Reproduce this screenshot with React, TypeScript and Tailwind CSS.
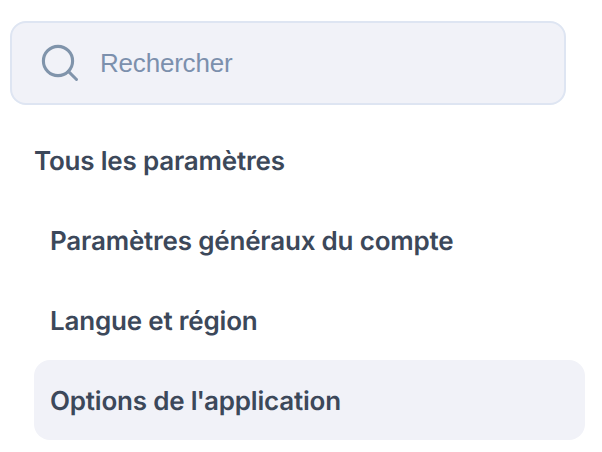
import { ReactNode, useState } from "react";

interface SettingsItem {
  id: string;
  label: ReactNode;
}

const items: SettingsItem[] = [
  { id: "account", label: "Paramètres généraux du compte" },
  { id: "language", label: "Langue et région" },
  {
    id: "app",
    label: (
      <>
        Options de <span className="tracking-[-1px]">l'</span>application
      </>
    ),
  },
];

const SearchIcon = () => (
  <svg width="40" height="40" viewBox="0 0 40 40" fill="none" className="shrink-0 text-[#8094ab]">
    <circle cx="18" cy="18" r="14.6" stroke="currentColor" strokeWidth="3.1" />
    <path d="M28.4 28.4l8.1 8.1" stroke="currentColor" strokeWidth="3" strokeLinecap="round" />
  </svg>
);

const App = () => {
  const [active, setActive] = useState("app");

  return (
    <div className="h-[452px] w-[602px] overflow-hidden bg-white pl-[10px] pr-[17px] pt-[21px] font-['Inter',sans-serif]">
      <label className="flex h-[84px] w-[556px] items-center rounded-2xl border-2 border-[#dee5f2] bg-[#f1f2f8] pl-[28px]">
        <SearchIcon />
        <span className="pl-[20px] font-['Liberation_Sans',sans-serif] text-[26px] leading-[30px] tracking-[-0.2px] text-[#7c90ad]">
          Rechercher
        </span>
      </label>

      <nav className="mt-[15px] pl-6 text-[26px] font-semibold leading-[84px] tracking-[-0.2px] text-[#3c485a] [text-rendering:geometricPrecision]">
        <h2 className="h-20 whitespace-nowrap">Tous les paramètres</h2>
        <ul>
          {items.map((item) => (
            <li
              key={item.id}
              onClick={() => setActive(item.id)}
              className={`h-20 cursor-pointer whitespace-nowrap rounded-2xl pl-4 ${active === item.id ? "bg-[#f1f2f8]" : ""}`}
            >
              {item.label}
            </li>
          ))}
        </ul>
      </nav>
    </div>
  );
};

export default App;
